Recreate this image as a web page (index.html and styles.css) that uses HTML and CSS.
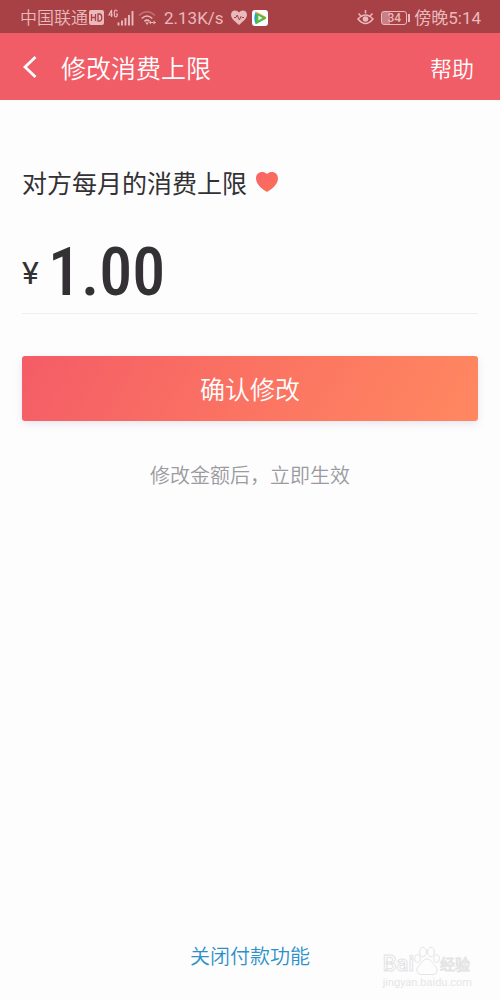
FILE: index.html
```html
<!DOCTYPE html>
<html lang="zh-CN">
<head>
<meta charset="utf-8">
<meta name="viewport" content="width=device-width, initial-scale=1">
<title>修改消费上限</title>
<link rel="stylesheet" href="styles.css">
</head>
<body>
<div class="page">
  <div class="status">
    <span>中国联通</span>
    <svg class="icon-hd" width="15" height="15" viewBox="0 0 15 15"><rect width="15" height="15" rx="2" fill="#e9b9bb"/><path d="M2.5 4v7M6.5 4v7M2.5 7.5h4M9 4v7h1.2q2.6 0 2.6-3.5T10.2 4z" fill="none" stroke="#a84146" stroke-width="1.3"/></svg>
    <svg class="icon-signal" width="26" height="18" viewBox="0 0 26 18"><path d="M3.6 8V1L1 6h3.8M9.3 2.500Q8.800 1 7.700 1 6.300 1 6.300 4.500T7.700 8q1.600 0 1.600-3H8" fill="none" stroke="#e9b9bb" stroke-width="1.200"/><path d="M10.500 16.500v-3M14 16.500v-5M17.500 16.500V9M21 16.500V6M24.500 16.500V2" stroke="#e9b9bb" stroke-width="1.900"/></svg>
    <svg class="icon-wifi" width="19" height="16" viewBox="0 0 19 16"><g fill="none" stroke-width="1.600"><path d="M1 5.500q8-7.500 16 0" stroke="#c27377"/><path d="M3.700 8.500q5.300-5 10.600 0" stroke="#e9b9bb"/><path d="M6.500 11.300q2.500-2.300 5 0" stroke="#e9b9bb"/></g><path d="M7.300 12.500h3.600L9.100 15zM11 12.500l2-1.700v3.400zM18 12.500l-2.500-1.900v3.800zM12.800 11.900h3v1.200h-3z" fill="#e9b9bb"/></svg>
    <span class="speed">2.13K/s</span>
    <svg class="icon-health" width="16" height="15" viewBox="0 0 16 15"><path d="M8 15C5 12 0 9 0 4.700 0 0 5.500-1 8 2.500 10.500-1 16 0 16 4.700 16 9 11 12 8 15z" fill="#e9b9bb"/><path d="M3 7.500h2l1.200-2.500 2.200 5 1.600-3.500 1 1h2" fill="none" stroke="#a84146" stroke-width="1"/></svg>
    <svg class="icon-app" width="16" height="16" viewBox="0 0 16 16"><rect width="16" height="16" rx="3" fill="#fff"/><path d="M3.500 2.200Q1 8 3.500 13.800L6 12V4z" fill="#2f9fd8"/><path d="M3.500 2.200Q2.500 1 5 2l8.700 4.800q1.300 1 0 2L11 10.500 5.500 5z" fill="#f2a93c"/><path d="M5 3.300l8.700 4q.8.700 0 1.500L5 13.700q-1.500.6-1.500-.7z" fill="#55b848"/><path d="M6.300 5.500v5L10.500 8z" fill="#e8f7df"/></svg>
    <span class="spacer"></span>
    <svg class="icon-eye" width="17" height="15" viewBox="0 0 17 15"><path d="M1 9q7.500-8 15 0-7.500 9-15 0zM1.500 3.500l2.200 2.300M8.500 0v3.500M15.500 3.500l-2.200 2.300" fill="none" stroke="#e9b9bb" stroke-width="1.500"/><circle cx="8.500" cy="9" r="2.800" fill="#e9b9bb"/></svg>
    <span class="battery">34</span>
    <span class="time">傍晚5:14</span>
  </div>
  <header class="bar">
    <button class="back" type="button" aria-label="返回"><svg width="14" height="22" viewBox="0 0 14 22"><path d="M12.500 1L2 11l10.500 10" fill="none" stroke="#fff" stroke-width="2.800"/></svg></button>
    <h1 class="title">修改消费上限</h1>
    <a class="help" href="#help">帮助</a>
  </header>
  <main class="content">
    <label class="label" for="amount">对方每月的消费上限
      <svg class="heart" width="22" height="20" viewBox="0 0 22 20"><defs><linearGradient id="heart" x1="0" y1="0" x2="1" y2="1"><stop offset="0" stop-color="#f8646a"/><stop offset="1" stop-color="#fc7055"/></linearGradient></defs><path d="M11 20C7.500 18 0 13 0 6.500 0 0 7-2 11 2 15-2 22 0 22 6.500 22 13 14.500 18 11 20z" fill="url(#heart)"/></svg>
    </label>
    <div class="amount-row">
      <span class="currency">¥</span>
      <input class="amount" id="amount" type="text" inputmode="decimal" value="1.00">
    </div>
    <button class="confirm" type="button">确认修改</button>
    <p class="note">修改金额后，立即生效</p>
  </main>
  <footer class="footer">
    <a class="close-link" href="#close">关闭付款功能</a>
    <div class="watermark">
      <div class="brand"><span class="brand-name">Bai</span><svg width="26" height="30" viewBox="0 0 26 30"><g fill="#fdfdfe" stroke="#e4e4e4"><ellipse cx="9" cy="6" rx="3.400" ry="4.800"/><ellipse cx="17" cy="6" rx="3.400" ry="4.800"/><ellipse cx="3.500" cy="12.500" rx="2.900" ry="4"/><ellipse cx="22.500" cy="12.500" rx="2.900" ry="4"/><path d="M13 13c-4 0-5 4-8 6.500-4 4-2 9.500 3 9h10c5 .5 7-5 3-9-3-2.500-4-6.500-8-6.500z"/></g><text class="du" x="13" y="26" text-anchor="middle">du</text></svg><span class="brand-cn">经验</span></div>
      <div class="domain">jingyan.baidu.com</div>
    </div>
  </footer>
</div>
</body>
</html>
```
FILE: styles.css
```css
* { box-sizing: border-box; }

body {
  margin: 0;
  background: #fdfdfe;
  color: #333134;
  font-family: Roboto, "Noto Sans CJK SC", sans-serif;
}

.page {
  display: flex;
  flex-direction: column;
  min-height: 100vh;
}

.status {
  display: flex;
  align-items: center;
  height: 33px;
  padding: 2px 19px 0 20px;
  background: #a84146;
  color: #e9b9bb;
  font-size: 17px;
  font-weight: 350;
  line-height: 24px;
}

.spacer { flex: 1; }
.icon-hd { margin-left: 1px; }
.icon-signal { margin-left: 4px; }
.icon-wifi { margin: 0 7px 0 4px; }
.speed, .time { font-weight: 400; }
.icon-health { margin: 0 5px 0 7px; }

.battery {
  position: relative;
  width: 26px;
  height: 14px;
  margin: 0 7px;
  border: 1px solid #e9b9bb;
  border-radius: 3px;
  background: linear-gradient(90deg, #c98084 34%, transparent 34%);
  font-size: 12px;
  font-weight: 500;
  line-height: 12px;
  text-align: center;
}

.battery::after {
  content: "";
  position: absolute;
  top: 2px;
  right: -4px;
  width: 2px;
  height: 8px;
  background: #e9b9bb;
}

.bar {
  display: flex;
  align-items: center;
  height: 67px;
  padding: 0 26px 0 23px;
  background: #f05d67;
  color: #fff;
}

.back {
  display: flex;
  padding: 0;
  border: 0;
  background: none;
}

.title {
  flex: 1;
  margin: 0 0 0 24px;
  font-family: "Noto Sans CJK SC", sans-serif;
  font-size: 25px;
  font-weight: 350;
  line-height: 36px;
}

.help {
  color: #fff;
  font-family: "Noto Sans CJK SC", sans-serif;
  font-size: 22px;
  font-weight: 350;
  line-height: 32px;
  text-decoration: none;
}

.content {
  flex: 1;
  padding: 64px 22px 0;
}

.label {
  display: flex;
  align-items: center;
  gap: 9px;
  font-family: "Noto Sans CJK SC", sans-serif;
  font-size: 25px;
  line-height: 36px;
}

.amount-row {
  display: flex;
  align-items: center;
  height: 114px;
  padding-top: 32px;
  border-bottom: 1px solid #eeeeef;
}

.currency {
  width: 26px;
  font-size: 32px;
  line-height: 40px;
}

.amount {
  flex: 1;
  min-width: 0;
  padding: 0;
  border: 0;
  outline: 0;
  background: none;
  color: inherit;
  font-family: "Roboto Condensed", Roboto, sans-serif;
  font-size: 66px;
  font-weight: 500;
  line-height: 80px;
}

.confirm {
  display: block;
  width: 100%;
  height: 65px;
  margin-top: 42px;
  padding: 0 0 2px;
  border: 0;
  border-radius: 3px;
  background: linear-gradient(120deg, #f45c67, #fb7362 50%, #ff8860);
  box-shadow: 0 3px 9px rgba(90, 60, 110, 0.12);
  color: #fff;
  font-family: "Noto Sans CJK SC", sans-serif;
  font-size: 25px;
  font-weight: 350;
}

.note {
  margin: 40px 0 0;
  color: #9b9a9e;
  font-family: "Noto Sans CJK SC", sans-serif;
  font-size: 20px;
  font-weight: 350;
  line-height: 28px;
  text-align: center;
}

.footer {
  position: relative;
  padding-bottom: 29px;
  text-align: center;
}

.close-link {
  color: #2d91c8;
  font-size: 20px;
  font-weight: 350;
  line-height: 28px;
  text-decoration: none;
}

.watermark {
  position: absolute;
  right: 28px;
  bottom: 10px;
  color: #fdfdfe;
  text-align: left;
  -webkit-text-stroke: 1px #e4e4e4;
}

.brand {
  display: flex;
  align-items: flex-end;
}

.brand-name {
  font-size: 22px;
  font-weight: 500;
  line-height: 24px;
}

.brand-cn {
  font-size: 15px;
  line-height: 22px;
}

.du {
  font-size: 13px;
  fill: #fdfdfe;
}

.domain {
  color: #e6e6e6;
  font-size: 11px;
  line-height: 14px;
  -webkit-text-stroke: 0;
}
```
